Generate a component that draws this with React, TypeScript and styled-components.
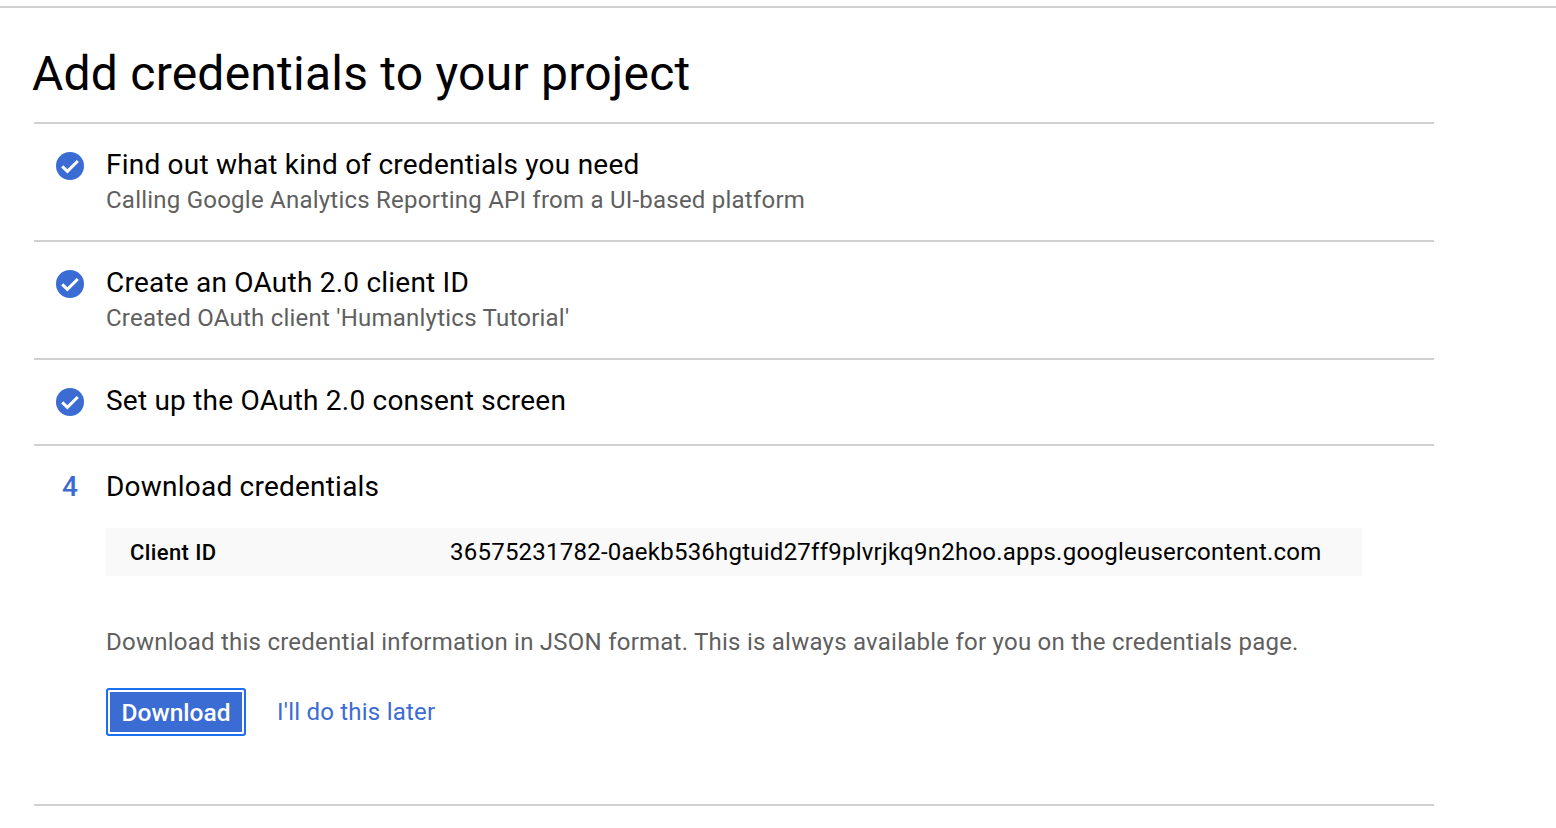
import React from "react";
import styled, { createGlobalStyle } from "styled-components";

const Global = createGlobalStyle`
  html, body { margin: 0; padding: 0; background: #fff; }
  body { font-family: Roboto, "Liberation Sans", sans-serif; overflow: hidden; }
`;

const Page = styled.div`
  width: 1556px;
  height: 828px;
  box-sizing: border-box;
  padding-top: 6px;
  overflow: hidden;
`;
const TopRule = styled.div`
  height: 2px;
  background: #d0d0d0;
`;
const Content = styled.main`
  width: 1400px;
  margin-left: 34px;
`;
const Title = styled.h1`
  margin: 0 0 0 -2px;
  height: 114px;
  box-sizing: border-box;
  padding-top: 37px;
  font-size: 48px;
  line-height: 58px;
  font-weight: 400;
  letter-spacing: 0.23px;
  color: #000;
`;
const Step = styled.section<{ $h: number }>`
  height: ${(p) => p.$h}px;
  box-sizing: border-box;
  border-top: 2px solid #d0d0d0;
  display: grid;
  grid-template-columns: 72px 1fr;
  align-content: start;
`;
const Marker = styled.div`
  display: flex;
  justify-content: center;
  align-items: center;
  width: 72px;
  height: 28px;
  margin-top: 28px;
`;
const Num = styled.span`
  font-size: 28px;
  line-height: 28px;
  font-weight: 500;
  margin-top: -2px;
  color: #3b6cd4;
`;
const Body = styled.div`
  padding-top: 23px;
`;
const StepTitle = styled.div`
  font-size: 28px;
  line-height: 36px;
  letter-spacing: 0.22px;
  color: #000;
`;
const StepSub = styled.div`
  font-size: 24px;
  line-height: 36px;
  margin-top: -1px;
  letter-spacing: 0.23px;
  color: #5f5f5f;
`;
const InfoRow = styled.div`
  display: grid;
  grid-template-columns: 320px 1fr;
  align-items: center;
  width: 1256px;
  height: 48px;
  margin-top: 23px;
  box-sizing: border-box;
  padding-left: 24px;
  background: #f9f9f9;
  font-size: 24px;
  letter-spacing: 0.235px;
  color: #000;
`;
const InfoKey = styled.span`
  font-size: 22px;
  font-weight: 500;
  letter-spacing: 0.4px;
`;
const Note = styled.p`
  margin: 48px 0 0;
  font-size: 24px;
  line-height: 36px;
  letter-spacing: 0.24px;
  color: #5f5f5f;
`;
const Actions = styled.div`
  display: flex;
  align-items: center;
  gap: 31px;
  margin-top: 28px;
`;
const Primary = styled.button`
  width: 140px;
  height: 48px;
  box-sizing: border-box;
  padding: 1px 0 0;
  border: 2px solid #1a6ff0;
  border-radius: 3px;
  box-shadow: inset 0 0 0 2px #fff;
  background: #3b6cd4;
  font: 500 24.5px Roboto, sans-serif;
  color: #fff;
`;
const Later = styled.a`
  font-size: 24px;
  letter-spacing: 0.22px;
  color: #3b6cd4;
`;

const Check = () => (
  <svg width="28" height="28" viewBox="0 0 28 28" aria-hidden="true">
    <circle cx="14" cy="14" r="14" fill="#3b6cd4" />
    <path d="M6.2 14.4l5.2 5L21.8 9" fill="none" stroke="#fff" strokeWidth="3" />
  </svg>
);

export default function App() {
  return (
    <Page>
      <Global />
      <TopRule />
      <Content>
        <Title>Add credentials to your project</Title>
        <Step $h={118}>
          <Marker><Check /></Marker>
          <Body>
            <StepTitle>Find out what kind of credentials you need</StepTitle>
            <StepSub>Calling Google Analytics Reporting API from a UI-based platform</StepSub>
          </Body>
        </Step>
        <Step $h={118}>
          <Marker><Check /></Marker>
          <Body>
            <StepTitle>Create an OAuth 2.0 client ID</StepTitle>
            <StepSub>Created OAuth client 'Humanlytics Tutorial'</StepSub>
          </Body>
        </Step>
        <Step $h={86}>
          <Marker><Check /></Marker>
          <Body>
            <StepTitle>Set up the OAuth 2.0 consent screen</StepTitle>
          </Body>
        </Step>
        <Step $h={360}>
          <Marker><Num>4</Num></Marker>
          <Body>
            <StepTitle>Download credentials</StepTitle>
            <InfoRow>
              <InfoKey>Client ID</InfoKey>
              <span>36575231782-0aekb536hgtuid27ff9plvrjkq9n2hoo.apps.googleusercontent.com</span>
            </InfoRow>
            <Note>Download this credential information in JSON format. This is always available for you on the credentials page.</Note>
            <Actions>
              <Primary>Download</Primary>
              <Later>I'll do this later</Later>
            </Actions>
          </Body>
        </Step>
        <Step $h={2} />
      </Content>
    </Page>
  );
}
